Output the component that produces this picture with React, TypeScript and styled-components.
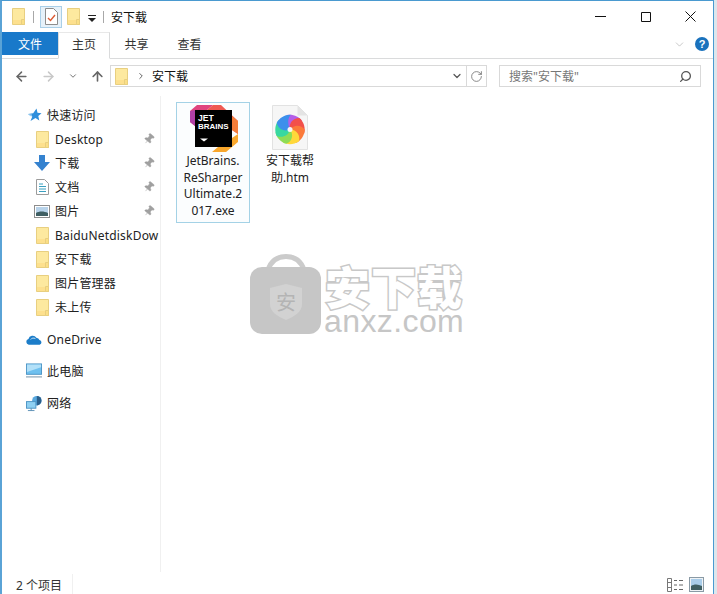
import React from "react";
import styled, { createGlobalStyle } from "styled-components";
import { ArrowLeft, ArrowRight, ArrowUp, ChevronDown, ChevronRight, RotateCw, Search, Pin } from "lucide-react";

const Global = createGlobalStyle`
  html, body {
    margin: 0;
    padding: 0;
    background: #dde6ec;
  }
  body {
    font-family: "Noto Sans", "Noto Sans CJK SC", sans-serif;
    color: #1a1a1a;
    overflow: hidden;
  }
`;

const Win = styled.div`
  position: relative;
  width: 714px;
  height: 594px;
  box-sizing: border-box;
  border-left: 2px solid #5aa3d6;
  border-top: 1px solid #4a9ad0;
  border-right: 1px solid #4a9ad0;
  background: #fff;
  display: flex;
  flex-direction: column;
  overflow: hidden;
`;

const TitleBar = styled.div`
  height: 31px;
  display: flex;
  align-items: center;
  flex-shrink: 0;
  padding-left: 10px;
`;

const TitleSep = styled.div<{ $left: number; $right: number }>`
  width: 1px;
  height: 12px;
  background: #a8a8a8;
  margin: 0 ${(p) => p.$right}px 0 ${(p) => p.$left}px;
`;

const CheckBtn = styled.div`
  width: 22px;
  height: 22px;
  box-sizing: border-box;
  border: 1px solid #a9cfe8;
  background: #e6f1f9;
  display: flex;
  align-items: center;
  justify-content: center;
  margin-right: 5px;
`;

const QuickArrow = styled.svg`
  margin: 4px 0 0 8px;
`;

const TitleText = styled.div`
  font-size: 12px;
  color: #111;
`;

const WinButtons = styled.div`
  margin-left: auto;
  display: flex;
  align-items: center;
`;

const WinButton = styled.div`
  width: 45px;
  display: flex;
  justify-content: center;
  align-items: center;
  color: #111;
`;

const TabRow = styled.div`
  height: 27px;
  display: flex;
  align-items: flex-start;
  border-bottom: 1px solid #dadbdc;
  flex-shrink: 0;
  box-sizing: border-box;
`;

const FileTab = styled.div`
  width: 56px;
  height: 23px;
  background: #1979ca;
  color: #fff;
  font-size: 12px;
  display: flex;
  align-items: center;
  justify-content: center;
`;

const Tab = styled.div<{ $active?: boolean }>`
  width: ${(p) => (p.$active ? "52px" : "53px")};
  font-size: 12px;
  color: #333;
  display: flex;
  align-items: center;
  justify-content: center;
  box-sizing: border-box;
  padding-bottom: 3px;
  height: 27px;
  ${(p) =>
    p.$active &&
    `border: 1px solid #dadbdc; border-top: 1px solid #e8e8e8; border-bottom: 1px solid #fff; background: #fff;`}
`;

const RibbonRight = styled.div`
  margin-left: auto;
  height: 24px;
  display: flex;
  align-items: center;
  gap: 9px;
  padding-right: 4px;
  color: #9a9a9a;
`;

const HelpDot = styled.div`
  width: 14px;
  height: 14px;
  border-radius: 50%;
  background: #1a72bd;
  color: #fff;
  font-family: "Liberation Sans", sans-serif;
  font-size: 11px;
  font-weight: bold;
  display: flex;
  align-items: center;
  justify-content: center;
`;

const NavBar = styled.div`
  height: 37px;
  display: flex;
  align-items: center;
  flex-shrink: 0;
  padding: 0 12px 3px 12px;
  box-sizing: border-box;
`;

const NavIcons = styled.div`
  display: flex;
  align-items: center;
  width: 96px;
  gap: 12px;
`;

const AddressBox = styled.div`
  width: 377px;
  height: 22px;
  box-sizing: border-box;
  border: 1px solid #d9d9d9;
  display: flex;
  align-items: center;
  padding-left: 4px;
  font-size: 12px;
  color: #111;
`;

const AddrChevron = styled(ChevronRight)`
  margin: 0 6px 0 8px;
`;

const AddrEnd = styled.div`
  margin-left: auto;
  display: flex;
  align-items: center;
  height: 100%;
`;

const AddrCell = styled.div<{ $line?: boolean }>`
  width: 19px;
  height: 100%;
  display: flex;
  align-items: center;
  justify-content: center;
  color: #555;
  border-left: ${(p) => (p.$line ? "1px solid #d9d9d9" : "none")};
`;

const SearchBox = styled.div`
  margin-left: 12px;
  flex: 1;
  height: 22px;
  box-sizing: border-box;
  border: 1px solid #d9d9d9;
  display: flex;
  align-items: center;
  justify-content: space-between;
  padding: 0 8px 0 9px;
  font-size: 12px;
  color: #777;
`;

const SearchIcon = styled(Search)`
  transform: scaleX(-1);
`;

const Main = styled.div`
  flex: 1;
  display: flex;
  min-height: 0;
`;

const Sidebar = styled.div`
  width: 159px;
  flex-shrink: 0;
  border-right: 1px solid #f0f0f0;
  padding-top: 7px;
  box-sizing: border-box;
  overflow: hidden;
`;

const NavItem = styled.div<{ $child?: boolean; $gapTop?: number }>`
  height: 24px;
  display: flex;
  align-items: center;
  position: relative;
  font-size: 12px;
  letter-spacing: 0.2px;
  color: #222;
  white-space: nowrap;
  padding-left: ${(p) => (p.$child ? "32px" : "24px")};
  margin-top: ${(p) => p.$gapTop ?? 0}px;
`;

const ItemIcon = styled.span`
  width: 16px;
  margin-right: 5px;
  flex-shrink: 0;
  display: flex;
  align-items: center;
  justify-content: center;
`;

const PinMark = styled.span`
  position: absolute;
  right: 5px;
  top: 6px;
  color: #a0a0a0;
  display: flex;
`;

const PinIcon = styled(Pin)`
  transform: rotate(40deg);
`;

const Content = styled.div`
  flex: 1;
  position: relative;
  display: flex;
  align-items: flex-start;
  padding: 6px 0 0 15px;
  gap: 3px;
`;

const FileCell = styled.div<{ $selected?: boolean }>`
  width: 74px;
  box-sizing: border-box;
  height: ${(p) => (p.$selected ? "121px" : "auto")};
  border: 1px solid ${(p) => (p.$selected ? "#a4d2e6" : "transparent")};
  background: ${(p) => (p.$selected ? "#fbfdfe" : "transparent")};
  display: flex;
  flex-direction: column;
  align-items: center;
`;

const FileIcon = styled.div`
  height: 50px;
  box-sizing: border-box;
  padding-top: 1px;
  display: flex;
  align-items: flex-start;
  justify-content: center;
`;

const FileName = styled.div`
  font-size: 12px;
  line-height: 16.7px;
  color: #222;
  text-align: center;
  width: 72px;
  white-space: nowrap;
`;

const Watermark = styled.div`
  position: absolute;
  left: 89px;
  top: 158px;
  display: flex;
  gap: 3px;
  pointer-events: none;
`;

const Brand = styled.div`
  padding-top: 9px;
  display: flex;
  flex-direction: column;
  align-items: center;
`;

const BrandCn = styled.div`
  font-family: "Noto Sans CJK SC", sans-serif;
  font-size: 45px;
  font-weight: 900;
  line-height: 46px;
  letter-spacing: 1px;
  color: #fff;
  -webkit-text-stroke: 3px #c8c8c8;
  paint-order: stroke fill;
`;

const BrandEn = styled.div`
  font-family: "Liberation Sans", sans-serif;
  font-size: 32px;
  line-height: 24px;
  color: #c6c6c6;
  letter-spacing: 0.4px;
`;

const StatusBar = styled.div`
  height: 22px;
  flex-shrink: 0;
  display: flex;
  align-items: center;
  padding: 3px 9px 0 14px;
  box-sizing: border-box;
  font-size: 12px;
  color: #333;
`;

const StatusSep = styled.div`
  width: 1px;
  height: 22px;
  background: #f0f0f0;
  margin-left: 10px;
`;

const StatusIcons = styled.div`
  margin-left: auto;
  display: flex;
  align-items: center;
  gap: 5px;
`;

const Folder = () => (
  <svg width="13" height="17" viewBox="0 0 13 17">
    <path d="M.5.5h12v16H.5z" fill="#fde08e" stroke="#e8cf80" />
    <path d="M1 1h11v11H1z" fill="#fde99f" />
    <path d="M9.500 11.500h3v5h-3z" fill="#fbdf86" stroke="#e8cf80" />
  </svg>
);

const Star = () => (
  <svg width="15" height="14" viewBox="0 0 15 14">
    <path d="M9.500.5l1 4.300 4 .4-3.200 2.700 1 4.600-3.800-2.400-5 3 1.800-4.600L1 6l5.200-.8z" fill="#2f8fdc" />
    <path d="M1 6l4 .4-.5 2L3 8z" fill="#9ccff2" />
  </svg>
);

const DownArrow = () => (
  <svg width="16" height="16" viewBox="0 0 16 16">
    <path d="M5 0h6v7h5l-8 9-8-9h5z" fill="#3582cf" />
  </svg>
);

const DocIcon = () => (
  <svg width="13" height="16" viewBox="0 0 13 16">
    <path d="M.5.5h8l4 4v11H.5z" fill="#fff" stroke="#9c9c9c" />
    <path d="M3 5h4M3 7.500h7M3 10h7M3 12.500h7" stroke="#3aa0c0" />
  </svg>
);

const PicIcon = () => (
  <svg width="16" height="13" viewBox="0 0 16 13">
    <rect x=".5" y=".5" width="15" height="12" fill="#fff" stroke="#8d8d8d" />
    <rect x="2" y="2" width="12" height="9" fill="#b8d3ea" />
    <path d="M2 8c3-2 8-2 12 0v3H2z" fill="#3f5f63" />
  </svg>
);

const Cloud = () => (
  <svg width="17" height="11" viewBox="0 0 17 11">
    <path d="M3 11a3 3 0 0 1-.4-5.900A4.600 4.600 0 0 1 11 3.600a3.700 3.700 0 0 1 3.300 2.500A2.500 2.500 0 0 1 14.500 11z" fill="#1c7dc9" />
    <path d="M5 5.500c1-1.500 3-2 5-1" fill="none" stroke="#fff" strokeWidth=".8" />
  </svg>
);

const Monitor = () => (
  <svg width="17" height="16" viewBox="0 0 17 16">
    <rect x=".5" y=".5" width="16" height="11" fill="#6ec0ef" stroke="#4b93c4" />
    <path d="M1 1h15v3L1 9z" fill="#b2e0f8" />
    <rect x="0" y="13.500" width="17" height="1.500" fill="#9fb3c2" />
  </svg>
);

const Network = () => (
  <svg width="17" height="17" viewBox="0 0 17 17">
    <circle cx="11.500" cy="5.500" r="5" fill="#58a8de" />
    <path d="M11.500.5a5 5 0 0 1 0 10z" fill="#2a5f8c" />
    <rect x=".5" y="6.500" width="10" height="7" fill="#8fd0f2" stroke="#4b93c4" />
    <path d="M2 16h7M5.500 13.500V16" stroke="#5a8fb4" />
  </svg>
);

const CheckDoc = () => (
  <svg width="13" height="17" viewBox="0 0 13 17">
    <path d="M.5.500h8l4 4v12H.5z" fill="#fff" stroke="#8d8d8d" />
    <path d="M3 10l2.500 2.500L10 7" fill="none" stroke="#dc5a33" strokeWidth="1.400" />
  </svg>
);

const JetLogo = () => (
  <svg width="50" height="48" viewBox="0 0 50 48" fontFamily="Liberation Sans, sans-serif" fontWeight="bold">
    <path d="M2 7L9 1H25L19 6H7V22L2 18z" fill="#e0457f" />
    <path d="M2 7L7 6V22L2 18z" fill="#b03fa6" />
    <path d="M25 1H33L50 17V30L44 26V12L38 6H19z" fill="#ef5a52" />
    <path d="M44 12L50 17V30L44 26z" fill="#f47d3a" />
    <path d="M44 34L50 30V38L38 48H24L30 43H44z" fill="#f9a72c" />
    <rect x="7" y="6" width="37" height="37" fill="#000" />
    <text x="10" y="17" fontSize="8.600" fill="#fff">JET</text>
    <text x="10" y="24.500" fontSize="8" fill="#fff">BRAINS</text>
    <path d="M12 34.500h8l-4 3z" fill="#fff" />
  </svg>
);

const PETALS = ["#b45ee8", "#f2504a", "#fb7a3a", "#ffd83a", "#8fdc55", "#38d8a0", "#3c8fec"];

const HtmIcon = () => (
  <svg width="36" height="46" viewBox="0 0 36 46">
    <path d="M.5 1.500h25l10 10v34H.5z" fill="#f6f6f6" stroke="#e2e2e2" />
    <path d="M25.500 1.500v10h10z" fill="#e4e4e4" />
    <g transform="translate(18 25.500)">
      {PETALS.map((c, i) => (
        <path
          key={c}
          transform={`rotate(${(360 / PETALS.length) * i})`}
          d="M0 0C-6-3-7-10-3-14.500C3-15.500 9-13 12-8.500C8-9 3-6 0 0z"
          fill={c}
        />
      ))}
      <circle r="2.500" fill="#f6f6f6" />
    </g>
  </svg>
);

const BagLogo = () => (
  <svg width="71" height="80" viewBox="0 0 71 80">
    <path d="M18 16C21 7 27 2.500 36 2.500S51 7 54 16" fill="none" stroke="#cbcbcb" strokeWidth="5" />
    <rect x="0" y="13" width="71" height="67" rx="12" fill="#c6c6c6" />
    <path d="M20 34l16-4 16 4v16c0 8-7 12-16 16-9-4-16-8-16-16z" fill="#d2d2d2" />
    <text x="36" y="56" textAnchor="middle" fontSize="20" fill="#b4b4b4" fontFamily="Noto Sans CJK SC, sans-serif">安</text>
  </svg>
);

const ListViewIcon = () => (
  <svg width="17" height="14" viewBox="0 0 17 14">
    <path d="M.5.500h4v13h-4z" fill="#fff" stroke="#777" />
    <path d="M1 4.500h3M1 9.500h3" stroke="#777" />
    <path d="M7 2.500h3M12 2.500h4M7 7h3M12 7h4M7 11.500h3M12 11.500h4" stroke="#666" />
  </svg>
);

const ThumbIcon = () => (
  <svg width="15" height="15" viewBox="0 0 15 15">
    <rect x=".5" y=".5" width="14" height="14" fill="#eef2f5" stroke="#8a9aa5" />
    <rect x="2" y="2" width="11" height="7" fill="#a9cdea" />
    <path d="M2 9c3-2 7-2 11 0v4H2z" fill="#3f5f63" />
  </svg>
);

const quick: { label: string; icon: React.ReactNode }[] = [
  { label: "Desktop", icon: <Folder /> },
  { label: "下载", icon: <DownArrow /> },
  { label: "文档", icon: <DocIcon /> },
  { label: "图片", icon: <PicIcon /> },
];

const folders = ["BaiduNetdiskDow", "安下载", "图片管理器", "未上传"];

export default function App() {
  return (
    <Win>
      <Global />
      <TitleBar>
        <Folder />
        <TitleSep $left={8} $right={6} />
        <CheckBtn>
          <CheckDoc />
        </CheckBtn>
        <Folder />
        <QuickArrow width="8" height="8" viewBox="0 0 8 8">
          <path d="M0 0h8v1H0zM0 3h8L4 7z" fill="#222" />
        </QuickArrow>
        <TitleSep $left={7} $right={7} />
        <TitleText>安下载</TitleText>
        <WinButtons>
          <WinButton>
            <svg width="11" height="11" viewBox="0 0 11 11">
              <path d="M0 5.500h11" stroke="#111" />
            </svg>
          </WinButton>
          <WinButton>
            <svg width="10" height="10" viewBox="0 0 10 10">
              <path d="M.5.500h9v9h-9z" fill="none" stroke="#111" />
            </svg>
          </WinButton>
          <WinButton>
            <svg width="11" height="11" viewBox="0 0 11 11">
              <path d="M.5.500l10 10M10.500.5l-10 10" stroke="#111" />
            </svg>
          </WinButton>
        </WinButtons>
      </TitleBar>
      <TabRow>
        <FileTab>文件</FileTab>
        <Tab $active>主页</Tab>
        <Tab>共享</Tab>
        <Tab>查看</Tab>
        <RibbonRight>
          <ChevronDown size={13} strokeWidth={1} />
          <HelpDot>?</HelpDot>
        </RibbonRight>
      </TabRow>
      <NavBar>
        <NavIcons>
          <ArrowLeft size={15} color="#666" strokeWidth={2.4} />
          <ArrowRight size={15} color="#c8c8c8" strokeWidth={2.4} />
          <ChevronDown size={10} color="#777" strokeWidth={2.4} />
          <ArrowUp size={15} color="#666" strokeWidth={2.6} />
        </NavIcons>
        <AddressBox>
          <Folder />
          <AddrChevron size={10} color="#666" strokeWidth={2.4} />
          安下载
          <AddrEnd>
            <AddrCell>
              <ChevronDown size={12} strokeWidth={2.4} />
            </AddrCell>
            <AddrCell $line>
              <RotateCw size={13} strokeWidth={1.6} color="#777" />
            </AddrCell>
          </AddrEnd>
        </AddressBox>
        <SearchBox>
          搜索"安下载"
          <SearchIcon size={13} strokeWidth={2.4} color="#555" />
        </SearchBox>
      </NavBar>
      <Main>
        <Sidebar>
          <NavItem>
            <ItemIcon>
              <Star />
            </ItemIcon>
            快速访问
          </NavItem>
          {quick.map((q) => (
            <NavItem $child key={q.label}>
              <ItemIcon>{q.icon}</ItemIcon>
              {q.label}
              <PinMark>
                <PinIcon size={12} fill="#a0a0a0" strokeWidth={1} />
              </PinMark>
            </NavItem>
          ))}
          {folders.map((f) => (
            <NavItem $child key={f}>
              <ItemIcon>
                <Folder />
              </ItemIcon>
              {f}
            </NavItem>
          ))}
          <NavItem $gapTop={8}>
            <ItemIcon>
              <Cloud />
            </ItemIcon>
            OneDrive
          </NavItem>
          <NavItem $gapTop={8}>
            <ItemIcon>
              <Monitor />
            </ItemIcon>
            此电脑
          </NavItem>
          <NavItem $gapTop={8}>
            <ItemIcon>
              <Network />
            </ItemIcon>
            网络
          </NavItem>
        </Sidebar>
        <Content>
          <FileCell $selected>
            <FileIcon>
              <JetLogo />
            </FileIcon>
            <FileName>
              JetBrains.
              <br />
              ReSharper
              <br />
              Ultimate.2
              <br />
              017.exe
            </FileName>
          </FileCell>
          <FileCell>
            <FileIcon>
              <HtmIcon />
            </FileIcon>
            <FileName>
              安下载帮
              <br />
              助.htm
            </FileName>
          </FileCell>
          <Watermark>
            <BagLogo />
            <Brand>
              <BrandCn>安下载</BrandCn>
              <BrandEn>anxz.com</BrandEn>
            </Brand>
          </Watermark>
        </Content>
      </Main>
      <StatusBar>
        2 个项目
        <StatusSep />
        <StatusIcons>
          <ListViewIcon />
          <ThumbIcon />
        </StatusIcons>
      </StatusBar>
    </Win>
  );
}
